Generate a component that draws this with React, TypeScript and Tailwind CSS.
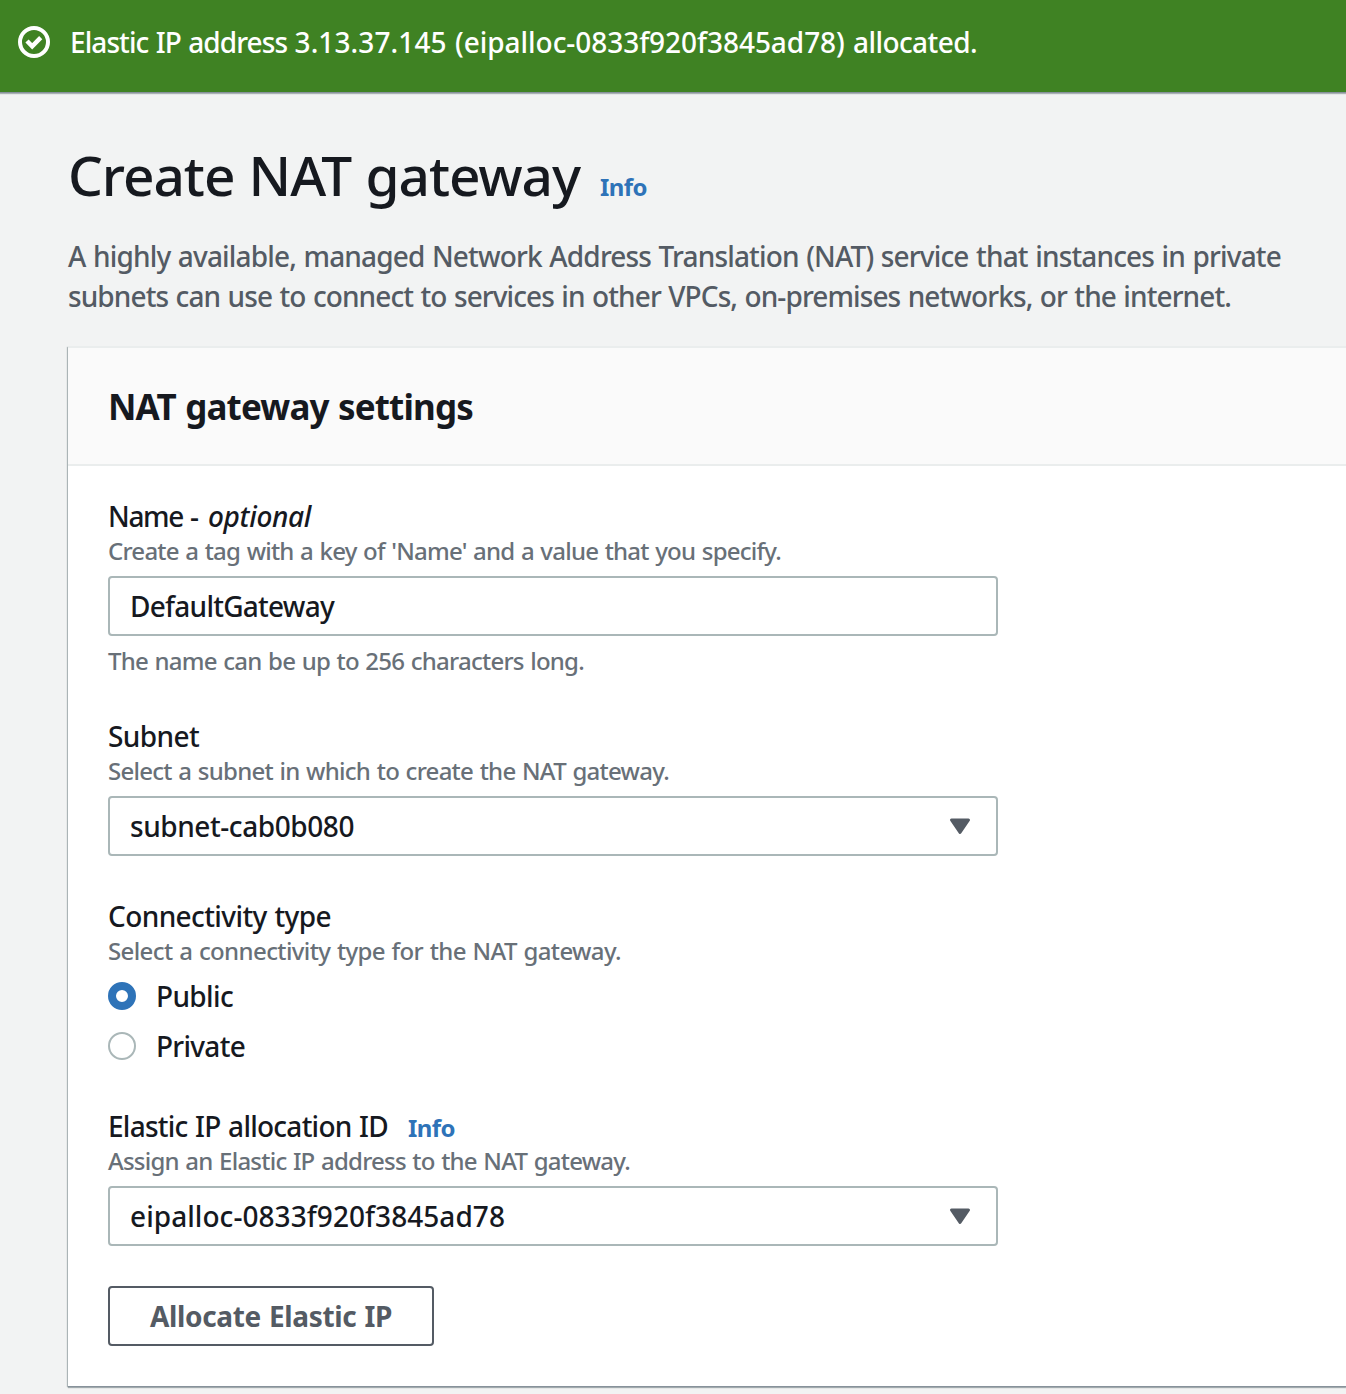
import React from "react";

type LineProps = { text: React.ReactNode; width: number; className: string };

function Line({ text, width, className }: LineProps) {
  const ref = React.useRef<HTMLSpanElement>(null);
  const [spacing, setSpacing] = React.useState(0);
  React.useLayoutEffect(() => {
    const el = ref.current;
    if (!el) return;
    const natural = el.getBoundingClientRect().width;
    setSpacing((width - natural) / (el.textContent || " ").length);
  }, [width]);
  return (
    <span className={"block whitespace-nowrap " + className}>
      <span ref={ref} className="inline-block whitespace-pre [word-spacing:1px]" style={{ letterSpacing: spacing + "px" }}>{text}</span>
    </span>
  );
}

function Select({ value, width }: { value: string; width: number }) {
  return (
    <button className="flex h-[60px] w-[890px] items-center justify-between rounded-[4px] border-2 border-[#aab7b8] bg-white pr-[25px] pl-5">
      <Line text={value} width={width} className="text-[28px] leading-[40px] font-medium text-[#16191f]" />
      <svg width="22" height="17" viewBox="0 0 22 17" fill="#545b64"><path d="M2.5 2H19.5L11 14.5Z" stroke="#545b64" strokeWidth="3" strokeLinejoin="round" /></svg>
    </button>
  );
}

const label = "h-10 text-[28px] leading-[40px] font-medium text-[#16191f]";
const hint = "h-[30px] text-[24px] leading-[30px] font-medium text-[#687078]";
const banner = "text-[28px] leading-[40px] font-medium text-white";

export default function App() {
  return (
    <div className="h-[1394px] w-full overflow-hidden bg-[#f2f3f3] font-['Noto_Sans',sans-serif]">
      <header className="flex h-[92px] items-start bg-[#3f8223] pt-[22px] pl-[18px] shadow-[0_1px_0_#87929b,0_2px_1px_#001c244d]">
        <svg className="mt-1 mr-5" width="32" height="32" viewBox="0 0 32 32" fill="none" stroke="white" strokeWidth="4"><circle cx="16" cy="16" r="14" /><path d="M9 15L14.2 20.3L22.7 11.7" strokeWidth="4.5" /></svg>
        <Line text="Elastic IP address " width={224.5} className={banner} />
        <Line text="3.13.37.145 " width={160.5} className={banner} />
        <Line text="(eipalloc-0833f920f3845ad78) " width={398} className={banner} />
        <Line text="allocated." width={124} className={banner} />
      </header>
      <main className="pt-[47px] pl-[68px]">
        <div className="flex h-[72px] items-baseline gap-5">
          <Line text="Create NAT gateway" width={512} className="text-[55px] leading-[72px] font-medium text-[#16191f]" />
          <Line text="Info" width={47} className="text-[24px] font-bold text-[#2e73b8]" />
        </div>
        <div className="mt-[25px] text-[28px] leading-[40px] font-medium text-[#545b64]">
          <Line text="A highly available, managed Network Address Translation (NAT) service that instances in private" width={1213} className="" />
          <Line text="subnets can use to connect to services in other VPCs, on-premises networks, or the internet." width={1163} className="" />
        </div>
        <section className="mt-[30px] h-[1040px] border-t-2 border-[#eaeded] bg-white shadow-[0_1px_0_#87929b,0_2px_1px_#001c244d,-1px_1px_1px_#001c2440]">
          <div className="flex h-[118px] items-center border-b-2 border-[#eaeded] bg-[#fafafa] pt-[2px] pl-10">
            <Line text="NAT gateway settings" width={365} className="text-[35px] leading-[44px] font-bold text-[#16191f]" />
          </div>
          <div className="pt-[30px] pl-10">
            <div className={"flex " + label}>
              <Line text="Name " width={82} className="" />
              <Line text="- " width={18} className="" />
              <Line text={<i>optional</i>} width={103} className="" />
            </div>
            <Line text="Create a tag with a key of 'Name' and a value that you specify." width={673} className={hint} />
            <div className="mt-[10px] flex h-[60px] w-[890px] items-center rounded-[4px] border-2 border-[#aab7b8] bg-white pl-5">
              <Line text="DefaultGateway" width={204} className="text-[28px] leading-[40px] font-medium text-[#16191f]" />
            </div>
            <Line text="The name can be up to 256 characters long." width={476} className={"mt-[10px] " + hint} />
            <Line text="Subnet" width={91} className={"mt-10 " + label} />
            <Line text="Select a subnet in which to create the NAT gateway." width={561} className={"mb-[10px] " + hint} />
            <Select value="subnet-cab0b080" width={224} />
            <Line text="Connectivity type" width={223} className={"mt-10 " + label} />
            <Line text="Select a connectivity type for the NAT gateway." width={513} className={hint} />
            <div className="mt-[10px] flex h-10 items-center gap-5">
              <span className="size-7 rounded-full border-8 border-[#2e73b8] bg-white" />
              <Line text="Public" width={77} className={label} />
            </div>
            <div className="mt-[10px] flex h-10 items-center gap-5">
              <span className="size-7 rounded-full border-2 border-[#aab7b8] bg-white" />
              <Line text="Private" width={89} className={label} />
            </div>
            <div className="mt-10 flex h-10 items-baseline gap-5">
              <Line text="Elastic IP allocation ID" width={280} className={label} />
              <Line text="Info" width={47} className="text-[24px] font-bold text-[#2e73b8]" />
            </div>
            <Line text="Assign an Elastic IP address to the NAT gateway." width={522} className={"mb-[10px] " + hint} />
            <Select value="eipalloc-0833f920f3845ad78" width={375} />
            <button className="mt-10 flex h-[60px] w-[326px] items-center justify-center rounded-[4px] border-2 border-[#545b64] bg-white">
              <Line text="Allocate Elastic IP" width={242} className="text-[28px] leading-[40px] font-bold text-[#545b64]" />
            </button>
          </div>
        </section>
      </main>
    </div>
  );
}
